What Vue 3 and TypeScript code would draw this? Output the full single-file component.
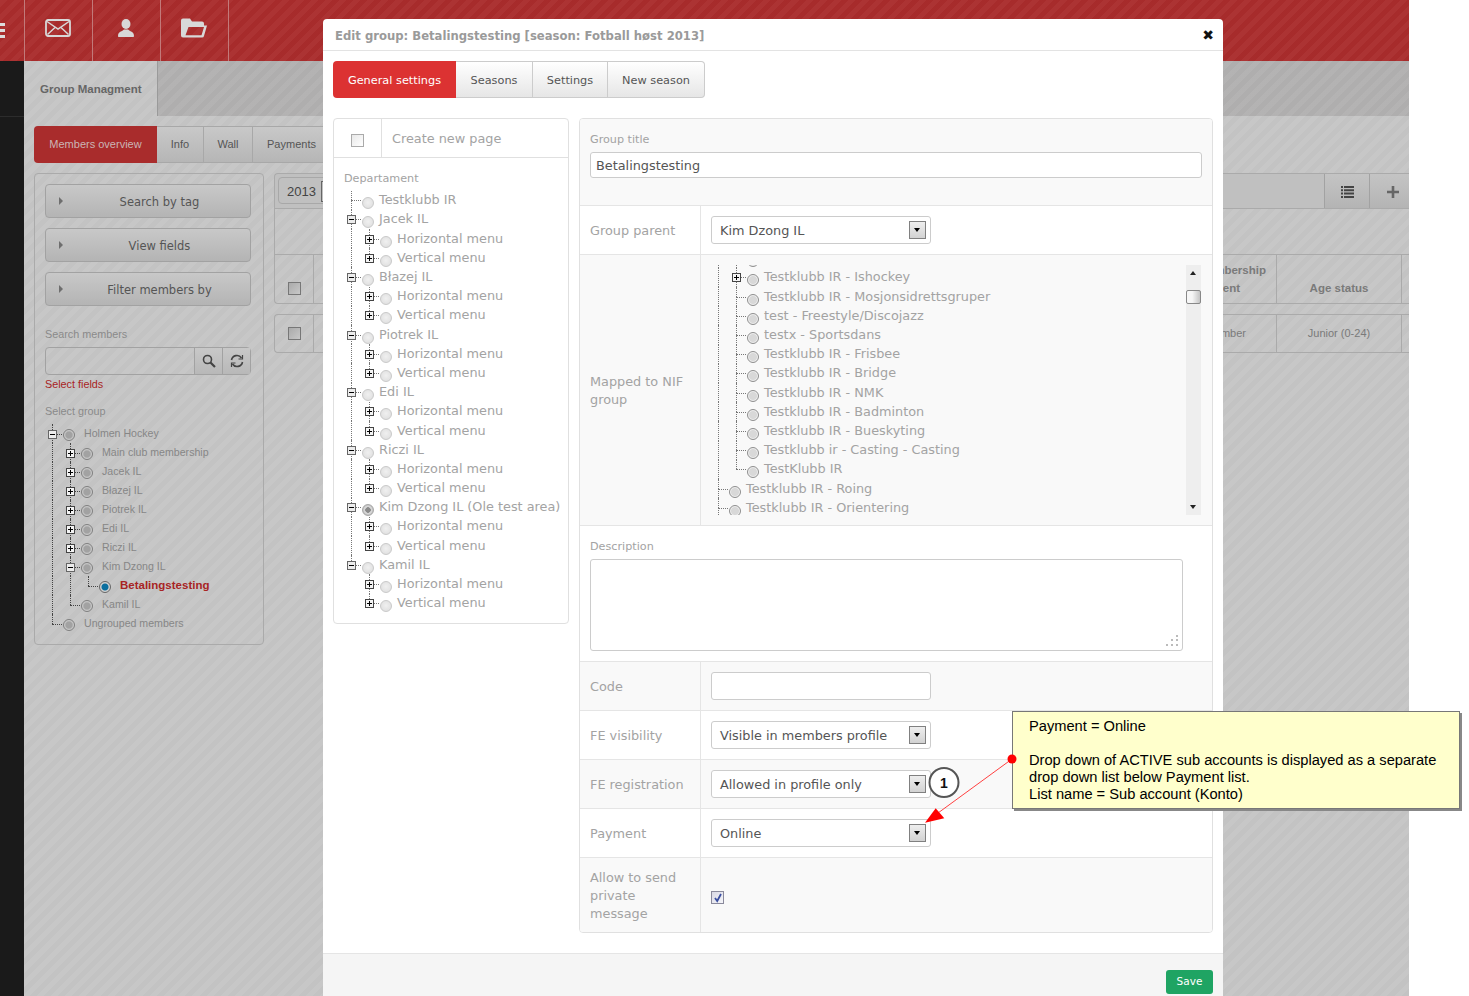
<script setup lang="ts">
interface TreeNode { label: string; open?: boolean; closed?: boolean; kids?: TreeNode[]; on?: boolean; picked?: boolean }
interface Row { label: string; guides: boolean[]; up: boolean; down: boolean; tog: string; on: boolean; picked: boolean }

function flat(nodes: TreeNode[], guides: boolean[] = [], root = true): Row[] {
  const out: Row[] = []
  nodes.forEach((n, i) => {
    const last = i === nodes.length - 1
    out.push({
      label: n.label,
      guides,
      up: !(root && i === 0 && guides.length > 0),
      down: !last,
      tog: n.open ? 'm' : n.closed ? 'p' : '',
      on: !!n.on,
      picked: !!n.picked,
    })
    if (n.kids) out.push(...flat(n.kids, [...guides, !last], false))
  })
  return out
}

const hv = (): TreeNode[] => [
  { label: 'Horizontal menu', closed: true },
  { label: 'Vertical menu', closed: true },
]
const deptRows = flat([
  { label: 'Testklubb IR' },
  ...['Jacek IL', 'Błazej IL', 'Piotrek IL', 'Edi IL', 'Riczi IL'].map((l) => ({ label: l, open: true, kids: hv() })),
  { label: 'Kim Dzong IL (Ole test area)', open: true, on: true, kids: hv() },
  { label: 'Kamil IL', open: true, kids: hv() },
])

// Rows with an empty label sit in the clipped part of the scrolled list.
const nifRows = flat([
  {
    label: '',
    open: true,
    kids: [
      { label: '' },
      { label: 'Testklubb IR - Ishockey', closed: true },
      ...['Testklubb IR - Mosjonsidrettsgruper', 'test - Freestyle/Discojazz', 'testx - Sportsdans', 'Testklubb IR - Frisbee', 'Testklubb IR - Bridge', 'Testklubb IR - NMK', 'Testklubb IR - Badminton', 'Testklubb IR - Bueskyting', 'Testklubb ir - Casting - Casting', 'TestKlubb IR'].map((l) => ({ label: l })),
    ],
  },
  { label: 'Testklubb IR - Roing' },
  { label: 'Testklubb IR - Orientering' },
  { label: '' },
])

const groupRows = flat([
  {
    label: 'Holmen Hockey',
    open: true,
    kids: [
      ...['Main club membership', 'Jacek IL', 'Błazej IL', 'Piotrek IL', 'Edi IL', 'Riczi IL'].map((l) => ({ label: l, closed: true })),
      { label: 'Kim Dzong IL', open: true, kids: [{ label: 'Betalingstesting', picked: true }] },
      { label: 'Kamil IL' },
    ],
  },
  { label: 'Ungrouped members' },
])

const sideButtons = ['Search by tag', 'View fields', 'Filter members by']
const feRows = [
  { label: 'FE visibility', value: 'Visible in members profile', alt: false },
  { label: 'FE registration', value: 'Allowed in profile only', alt: true },
  { label: 'Payment', value: 'Online', alt: false },
]
</script>

<template>
  <div class="app">
    <header class="topbar">
      <div class="burger"><i></i><i></i><i></i></div>
      <div class="topcell">
        <svg width="26" height="18" viewBox="0 0 26 18" fill="none" stroke="#d8d8d8" stroke-width="1.800"><rect x="1" y="1" width="24" height="16" rx="2" /><path d="M2 2.500l11 7.500 11-7.500" stroke-width="1.500" /><path d="M2.500 15.500l7.500-7M23.500 15.500l-7.500-7" stroke-width="1.500" /></svg>
      </div>
      <div class="topcell">
        <svg width="16" height="18" viewBox="0 0 16 18" fill="#d8d8d8"><ellipse cx="8" cy="5" rx="4.500" ry="5" /><path d="M0 17c0-3 1.500-4 4-5l2-1.500h4l2 1.500c2.500 1 4 2 4 5 0 .6-.4 1-1 1H1c-.6 0-1-.4-1-1z" /></svg>
      </div>
      <div class="topcell">
        <svg width="26" height="20" viewBox="0 0 26 20" fill="#d8d8d8" fill-rule="evenodd"><path d="M0 2.500a2 2 0 0 1 2-2h7l2 3h10a2 2 0 0 1 2 2v2h3l-3 10.500a2 2 0 0 1-2 1.500H2a2 2 0 0 1-2-2zM7.500 9h15.500l-2.500 8.200H4.500z" /></svg>
      </div>
    </header>

    <div class="below">
      <div class="blackcol"></div>
      <main class="main">
        <div class="tabstrip"><div class="striptab">Group Managment</div></div>
        <div class="content">
          <nav class="subtabs">
            <span class="subtab active">Members overview</span>
            <span class="subtab s-info">Info</span>
            <span class="subtab s-wall">Wall</span>
            <span class="subtab s-pay">Payments</span>
          </nav>
          <div class="columns">
            <aside class="side">
              <button v-for="b in sideButtons" :key="b" class="sidebtn" type="button">
                <i class="caret"></i><span>{{ b }}</span>
              </button>
              <div class="sidelabel sl-search">Search members</div>
              <div class="searchbox">
                <div class="searchinput"></div>
                <div class="searchbtn">
                  <svg width="14" height="14" viewBox="0 0 14 14" fill="none" stroke="#444" stroke-width="1.600"><circle cx="5.500" cy="5.500" r="4" /><path d="M8.500 8.500l4.500 4.500" stroke-width="2.200" /></svg>
                </div>
                <div class="searchbtn">
                  <svg width="14" height="14" viewBox="0 0 14 14" fill="none" stroke="#444" stroke-width="1.600"><path d="M1.500 6a5.500 5.500 0 0 1 10-2M12.500 8a5.500 5.500 0 0 1-10 2" /><path d="M12.500 1v4h-4M1.500 13V9h4" stroke-width="1.200" /></svg>
                </div>
              </div>
              <div class="selectfields">Select fields</div>
              <div class="sidelabel sl-group">Select group</div>
              <div class="tree gtree">
                <div v-for="(r, i) in groupRows" :key="i" class="trow">
                  <span v-for="(g, j) in r.guides" :key="j" class="node"><i v-if="g" class="vfull"></i></span>
                  <span class="node">
                    <i v-if="r.up" class="vup"></i><i v-if="r.down" class="vdown"></i><i class="hline"></i>
                    <span v-if="r.tog" class="tog" :class="r.tog"></span>
                  </span>
                  <span class="radio" :class="{ picked: r.picked }"></span>
                  <span class="tlabel" :class="{ pickedlabel: r.picked }">{{ r.label }}</span>
                </div>
              </div>
            </aside>

            <section class="rightcol">
              <div class="yearbar">
                <div class="yearsel">2013<i></i></div>
                <div class="barbtns">
                  <span class="barbtn b-list">
                    <svg width="13" height="12" viewBox="0 0 13 12" fill="#444"><path d="M0 0h2v2H0zM3 0h10v2H3zM0 3.300h2v2H0zM3 3.300h10v2H3zM0 6.600h2v2H0zM3 6.600h10v2H3zM0 10h2v2H0zM3 10h10v2H3z" /></svg>
                  </span>
                  <span class="barbtn b-plus">
                    <svg width="12" height="12" viewBox="0 0 12 12" fill="#666"><path d="M4.700 0h2.600v4.700H12v2.600H7.300V12H4.700V7.300H0V4.700h4.700z" /></svg>
                  </span>
                </div>
              </div>
              <div class="tblgap"></div>
              <div class="tbl thead">
                <div class="c1"><span class="chk"></span></div>
                <div class="c2"><b>Membership</b><b class="line2">Payment</b></div>
                <div class="c3"><b>Age status</b></div>
                <div class="c4"></div>
              </div>
              <div class="tbl tbody">
                <div class="c1"><span class="chk"></span></div>
                <div class="c2"><span>Member</span></div>
                <div class="c3"><span>Junior (0-24)</span></div>
                <div class="c4"></div>
              </div>
            </section>
          </div>
        </div>
      </main>
    </div>

    <div class="modal">
      <div class="mhead">
        <span>Edit group: Betalingstesting [season: Fotball høst 2013]</span>
        <span class="mclose">✖</span>
      </div>
      <div class="mbody">
        <nav class="mtabs">
          <span class="mtab active">General settings</span>
          <span class="mtab m2">Seasons</span>
          <span class="mtab m3">Settings</span>
          <span class="mtab m4">New season</span>
        </nav>
        <div class="mcols">
          <div class="deptpanel">
            <div class="newpage">
              <div class="npchk"><span class="chk light"></span></div>
              <div class="nptext">Create new page</div>
            </div>
            <div class="deptlabel">Departament</div>
            <div class="tree dtree">
              <div v-for="(r, i) in deptRows" :key="i" class="trow">
                <span v-for="(g, j) in r.guides" :key="j" class="node"><i v-if="g" class="vfull"></i></span>
                <span class="node">
                  <i v-if="r.up" class="vup"></i><i v-if="r.down" class="vdown"></i><i class="hline"></i>
                  <span v-if="r.tog" class="tog" :class="r.tog"></span>
                </span>
                <span class="radio" :class="{ onr: r.on }"></span>
                <span class="tlabel">{{ r.label }}</span>
              </div>
            </div>
          </div>

          <div class="form">
            <div class="frow stack alt titlerow">
              <label class="flabel">Group title</label>
              <div class="tinput">Betalingstesting</div>
            </div>
            <div class="frow">
              <label class="fkey">Group parent</label>
              <div class="fval"><div class="sel">Kim Dzong IL<i class="selbtn"></i></div></div>
            </div>
            <div class="frow alt nifrow">
              <label class="fkey"><span>Mapped to NIF group</span></label>
              <div class="fval nifval">
                <div class="tree ntree">
                  <div class="ninner">
                    <div v-for="(r, i) in nifRows" :key="i" class="trow">
                      <span v-for="(g, j) in r.guides" :key="j" class="node"><i v-if="g" class="vfull"></i></span>
                      <span class="node">
                        <i v-if="r.up" class="vup"></i><i v-if="r.down" class="vdown"></i><i class="hline"></i>
                        <span v-if="r.tog" class="tog" :class="r.tog"></span>
                      </span>
                      <span class="radio dark"></span>
                      <span v-if="r.label" class="tlabel">{{ r.label }}</span>
                    </div>
                  </div>
                </div>
                <div class="scrollbar">
                  <i class="sup"></i><i class="sthumb"></i><i class="sdown"></i>
                </div>
              </div>
            </div>
            <div class="frow stack descrow">
              <label class="flabel">Description</label>
              <div class="textarea">
                <svg class="grip" width="14" height="14" viewBox="0 0 14 14" fill="#bbb"><path d="M11 1h2v2h-2zM6 5h2v2H6zM11 5h2v2h-2zM1 10h2v2H1zM6 10h2v2H6zM11 10h2v2h-2z" /></svg>
              </div>
            </div>
            <div class="frow alt">
              <label class="fkey">Code</label>
              <div class="fval"><div class="sel"></div></div>
            </div>
            <div v-for="f in feRows" :key="f.label" class="frow" :class="{ alt: f.alt }">
              <label class="fkey">{{ f.label }}</label>
              <div class="fval"><div class="sel">{{ f.value }}<i class="selbtn"></i></div></div>
            </div>
            <div class="frow alt allowrow">
              <label class="fkey"><span>Allow to send private message</span></label>
              <div class="fval">
                <span class="checked">
                  <svg width="10" height="10" viewBox="0 0 10 10" fill="none" stroke="#3b4fa0" stroke-width="1.800"><path d="M2 5l2.200 3L8 1" /></svg>
                </span>
              </div>
            </div>
          </div>
        </div>
      </div>
      <footer class="mfoot"><span class="save">Save</span></footer>
    </div>

    <svg class="annot" width="1469" height="996" viewBox="0 0 1469 996">
      <path d="M1012 759L938 813" stroke="#ff4040" stroke-width="1" fill="none" />
      <path d="M925 822.700L935.700 808.300L944.300 818.300z" fill="#f00" />
      <circle cx="1012" cy="759" r="4.500" fill="#f00" />
      <circle cx="944" cy="782.500" r="14.500" fill="#fff" stroke="#555" stroke-width="2" />
      <text x="944" y="788" text-anchor="middle" class="onetxt">1</text>
    </svg>

    <div class="note">
      <div>Payment = Online</div>
      <div class="blank"></div>
      <div>Drop down of ACTIVE sub accounts is displayed as a separate</div>
      <div>drop down list below Payment list.</div>
      <div>List name = Sub account (Konto)</div>
    </div>
  </div>
</template>

<style>
html, body { margin: 0; background: #fff; overflow: hidden; }
</style>

<style scoped>
.app {
  position: relative;
  width: 1409px;
  height: 996px;
  overflow: visible;
  font-family: "DejaVu Sans", Verdana, sans-serif;
  --stripe: repeating-linear-gradient(135deg, rgba(255,255,255,.035) 0 5px, rgba(0,0,0,.012) 5px 10px);
  background: var(--stripe), #c5c5c5;
}
i { display: block; font-style: normal; }

.topbar { height: 61px; display: flex; padding-left: 24px; background: var(--stripe), #a92c2c; position: relative; box-sizing: border-box; }
.burger { position: absolute; left: 0; top: 23px; display: flex; flex-direction: column; gap: 3px; }
.burger i { width: 5px; height: 3px; background: #ddd; }
.topcell { width: 68px; height: 61px; border-left: 1px solid #c27a7a; display: flex; align-items: center; justify-content: center; padding: 0 2px 5px 0; box-sizing: border-box; }
.topcell:last-child { width: 69px; border-right: 1px solid #c27a7a; }

.below { display: flex; height: 935px; }
.blackcol { width: 24px; flex: none; background: linear-gradient(#1a1a1a 0 55px, #2c2c2c 55px 56px, #1a1a1a 56px); }
.main { flex: 1; min-width: 0; }
.tabstrip { height: 55px; background: var(--stripe), #b1b0b0; }
.striptab { width: 134px; height: 55px; box-sizing: border-box; padding: 21px 0 0 16px; background: var(--stripe), #c5c5c5; border-right: 1px solid #9a9a9a; font: bold 11.500px/14px "Liberation Sans", sans-serif; color: #666; white-space: nowrap; }
.content { padding: 10px 0 0 10px; }

.subtabs { display: flex; height: 37px; margin-bottom: 10px; }
.subtab { box-sizing: border-box; display: flex; align-items: center; justify-content: center; padding-bottom: 1px; font: 11px "Liberation Sans", sans-serif; color: #555; background: linear-gradient(#c8c8c8, #b6b6b6); border: 1px solid #a8a8a8; border-left: 0; }
.subtab.active { width: 123px; background: #a92c2c; color: #cbb5b5; border: 0; border-radius: 4px 0 0 4px; }
.s-info { width: 47px; }
.s-wall { width: 49px; }
.s-pay { width: 78px; }

.columns { display: flex; gap: 10px; }
.side { width: 230px; height: 472px; box-sizing: border-box; flex: none; border: 1px solid #aaa; border-radius: 4px; padding: 10px 12px 0 10px; }
.sidebtn { display: flex; align-items: center; position: relative; justify-content: center; width: 206px; height: 34px; margin-bottom: 10px; padding: 2px 0 0 23px; box-sizing: border-box; border: 1px solid #a2a2a2; border-radius: 4px; background: linear-gradient(#c8c8c8, #b4b4b4); font: 11.500px "DejaVu Sans", sans-serif; color: #555; }
.caret { position: absolute; left: 13px; top: 12px; width: 0; height: 0; border-left: 4px solid #6e6e6e; border-top: 4px solid transparent; border-bottom: 4px solid transparent; }
.sidelabel { font: 10.800px/13px "Liberation Sans", sans-serif; color: #8a8a8a; }
.sl-search { margin-top: 22px; }
.searchbox { display: flex; width: 206px; height: 28px; margin-top: 6px; box-sizing: border-box; border: 1px solid #a2a2a2; border-radius: 4px; }
.searchinput { flex: 1; }
.searchbtn { width: 27px; border-left: 1px solid #a2a2a2; display: flex; align-items: center; justify-content: center; background: linear-gradient(#c8c8c8, #b8b8b8); }
.selectfields { font: 10.800px/13px "Liberation Sans", sans-serif; color: #a82424; margin-top: 3px; }
.sl-group { margin-top: 14px; }

.tree { position: relative; }
.trow { display: flex; height: 19.200px; align-items: center; }
.node { position: relative; width: 18px; height: 100%; flex: none; }
.vfull, .vup, .vdown, .hline { position: absolute; }
.vfull { left: 8px; top: 0; bottom: 0; border-left: 1px dotted #777; }
.vup { left: 8px; top: 0; height: 50%; border-left: 1px dotted #777; }
.vdown { left: 8px; top: 50%; bottom: 0; border-left: 1px dotted #777; }
.hline { left: 8px; top: 50%; width: 10px; border-top: 1px dotted #777; }
.tog { position: absolute; left: 4px; top: 50%; width: 9px; height: 9px; margin-top: -4px; box-sizing: border-box; border: 1px solid #444; background: #f4f4f4; }
.tog::before { content: ""; position: absolute; left: 1px; top: 3px; width: 5px; height: 1px; background: #000; }
.tog.p::after { content: ""; position: absolute; left: 3px; top: 1px; width: 1px; height: 5px; background: #000; }
.tog.m { border-color: #666; background: #ececec; }
.radio { flex: none; width: 12px; height: 12px; box-sizing: border-box; margin: 0 0 0 1px; border-radius: 50%; border: 1px solid #c9c9c9; background: radial-gradient(circle at 50% 45%, #f0f0f0, #dcdcdc); transform: translateY(3px); }
.radio.onr { border: 1px solid #a8a8a8; background: radial-gradient(circle, #8a8a8a 0 2.500px, #d6d6d6 3px 4px, #bbb 5px); }
.radio.dark { border: 1px solid #8e8e8e; background: radial-gradient(circle at 50% 50%, #d8d8d8 0 3.500px, #eee 4.500px); }
.tlabel { margin-left: 5px; white-space: nowrap; font-size: 12.830px; line-height: 16px; color: #a3a3a3; }

.gtree { margin-top: 6px; margin-left: -1px; }
.gtree .trow { height: 19px; }
.gtree .radio { border: 1px solid #7f7f7f; background: radial-gradient(circle, #a2a2a2 0 3px, #c8c8c8 4.500px); transform: translateY(1px); }
.gtree .radio.picked { border-color: #666; background: radial-gradient(circle, #0b6f9f 0 3px, #d0d0d0 4px); }
.gtree .tlabel { margin-left: 9px; font: 10.600px/13px "Liberation Sans", sans-serif; color: #868686; }
.gtree .pickedlabel { color: #a82424; font: bold 11.500px/13px "Liberation Sans", sans-serif; }
.gtree .vfull, .gtree .vup, .gtree .vdown, .gtree .hline { border-color: #444; }

.rightcol { flex: 1; min-width: 0; overflow: hidden; }
.yearbar { height: 36px; box-sizing: border-box; border: 1px solid #aaa; border-right: 0; border-radius: 4px 0 0 0; display: flex; justify-content: space-between; background: #c0c0c0; }
.yearsel { margin: 3px 0 0 3px; width: 60px; height: 27px; box-sizing: border-box; border: 1px solid #a8a8a8; border-radius: 4px; padding: 6px 0 0 8px; font: 13px/16px "Liberation Sans", sans-serif; color: #444; position: relative; }
.yearsel i { position: absolute; left: 42px; top: 3px; width: 14px; height: 19px; border: 1px solid #666; }
.barbtns { display: flex; }
.barbtn { display: flex; align-items: center; justify-content: center; height: 34px; padding-top: 1px; background: linear-gradient(#c4c4c4, #b4b4b4); border-left: 1px solid #a2a2a2; box-sizing: border-box; }
.b-list { width: 45px; }
.b-plus { width: 40px; padding-left: 7px; }
.tblgap { height: 45px; border-left: 1px solid #aaa; box-sizing: border-box; }
.tbl { display: flex; box-sizing: border-box; border: 1px solid #aaa; border-right: 0; color: #7a7a7a; font: 11px "Liberation Sans", sans-serif; }
.thead { height: 50px; border-radius: 0 0 0 4px; font: bold 11.500px "Liberation Sans", sans-serif; }
.tbody { height: 39px; margin-top: 10px; border-radius: 4px 0 0 4px; }
.c1 { width: 39px; flex: none; border-right: 1px solid #aaa; box-sizing: border-box; display: flex; align-items: center; justify-content: center; }
.thead .c1 { padding-top: 18px; }
.c2 { flex: 1; min-width: 0; display: flex; flex-direction: column; align-items: flex-end; justify-content: center; padding-right: 10px; }
.thead .c2 { line-height: 18px; }
.line2 { margin-right: 26px; }
.tbody .c2 { padding: 0 30px 2px 0; }
.c3 { width: 126px; flex: none; border-left: 1px solid #aaa; border-right: 1px solid #aaa; box-sizing: border-box; display: flex; align-items: center; justify-content: center; }
.thead .c3 { padding-top: 18px; }
.tbody .c3 { padding-bottom: 2px; }
.c4 { width: 7px; flex: none; }
.chk { display: block; width: 13px; height: 13px; box-sizing: border-box; border: 1px solid #777; background: linear-gradient(135deg, #aaa, #c8c8c8); }
.chk.light { border-color: #aaa; background: linear-gradient(135deg, #e8e8e8, #fff); }

.modal { position: absolute; left: 323px; top: 19px; width: 900px; height: 977px; background: #fff; border-radius: 4px 4px 0 0; display: flex; flex-direction: column; }
.mhead { height: 32px; box-sizing: border-box; border-bottom: 1px solid #e3e3e3; padding: 9px 9px 0 12px; display: flex; justify-content: space-between; font: bold 11.650px/16px "DejaVu Sans", sans-serif; color: #9a9a9a; }
.mclose { color: #111; font-size: 14px; margin-top: -1px; }
.mbody { flex: 1; padding: 10px 10px 0; min-height: 0; }
.mtabs { display: flex; height: 37px; margin-bottom: 20px; }
.mtab { display: flex; align-items: center; justify-content: center; box-sizing: border-box; padding-top: 2px; font-size: 11.300px; color: #555; background: linear-gradient(#fff, #e6e6e6); border: 1px solid #ccc; border-left: 0; }
.mtab.active { width: 123px; background: #dc3232; color: #fff; border: 0; border-radius: 4px 0 0 4px; }
.m2 { width: 77px; }
.m3 { width: 75px; }
.m4 { width: 97px; border-radius: 0 4px 4px 0; }
.mcols { display: flex; gap: 10px; align-items: flex-start; }
.deptpanel { width: 236px; height: 506px; box-sizing: border-box; flex: none; border: 1px solid #e0e0e0; border-radius: 4px; }
.newpage { display: flex; height: 39px; border-bottom: 1px solid #e0e0e0; box-sizing: border-box; }
.npchk { width: 48px; border-right: 1px solid #e0e0e0; display: flex; align-items: center; justify-content: center; padding-top: 5px; box-sizing: border-box; }
.nptext { padding: 12px 0 0 10px; font-size: 12.830px; line-height: 16px; color: #a3a3a3; }
.deptlabel { margin: 14px 0 0 10px; font-size: 11.200px; line-height: 14px; color: #a3a3a3; }
.dtree { margin: 4.700px 0 0 9px; }

.form { flex: 1; border: 1px solid #e0e0e0; border-radius: 4px; height: 815px; box-sizing: border-box; overflow: hidden; }
.frow { display: flex; height: 49px; box-sizing: border-box; border-bottom: 1px solid #e5e5e5; }
.frow:last-child { border-bottom: 0; }
.alt { background: #f9f9f9; }
.stack { display: block; padding: 14px 10px 0; }
.titlerow { height: 87px; }
.descrow { height: 136px; }
.nifrow { height: 271px; }
.allowrow { height: 75px; }
.flabel { display: block; font-size: 11.200px; line-height: 14px; color: #a3a3a3; }
.tinput { margin-top: 5px; height: 26px; box-sizing: border-box; border: 1px solid #ccc; border-radius: 3px; background: #fff; padding: 5px 0 0 5px; font-size: 12.830px; line-height: 16px; color: #555; }
.fkey { width: 121px; flex: none; box-sizing: border-box; border-right: 1px solid #e5e5e5; padding: 2px 10px 0; display: flex; align-items: center; font-size: 12.830px; line-height: 18px; color: #a3a3a3; }
.allowrow .fkey { padding-top: 0; }
.fkey span { display: block; }
.fval { flex: 1; display: flex; align-items: center; padding-left: 10px; min-width: 0; }
.allowrow .fval { padding-top: 4px; }
.sel { position: relative; width: 220px; height: 28px; box-sizing: border-box; border: 1px solid #ccc; border-radius: 3px; background: #fff; padding: 6px 0 0 8px; font-size: 12.830px; line-height: 16px; color: #555; }
.selbtn { position: absolute; right: 4px; top: 4px; width: 17px; height: 18px; box-sizing: border-box; border: 1.500px solid #808080; background: linear-gradient(#eee, #d2d2d2); }
.selbtn::after { content: ""; position: absolute; left: 3.500px; top: 6px; border-left: 3.500px solid transparent; border-right: 3.500px solid transparent; border-top: 4px solid #000; }
.nifval { align-items: flex-start; padding: 10px 11px 0 9px; justify-content: space-between; }
.ntree { width: 460px; height: 250px; overflow: hidden; }
.ninner { margin-top: -35.500px; }
.scrollbar { position: relative; width: 15px; height: 250px; background: #eeeeee; flex: none; }
.sup { position: absolute; left: 4px; top: 6px; border-left: 3.500px solid transparent; border-right: 3.500px solid transparent; border-bottom: 4px solid #222; }
.sdown { position: absolute; left: 4px; bottom: 6px; border-left: 3.500px solid transparent; border-right: 3.500px solid transparent; border-top: 4px solid #222; }
.sthumb { position: absolute; left: 0; top: 25px; width: 15px; height: 14px; box-sizing: border-box; border: 1px solid #888; border-radius: 2px; background: linear-gradient(90deg, #f6f6f6 40%, #c4c4c4); }
.textarea { position: relative; margin-top: 5px; width: 593px; height: 92px; box-sizing: border-box; border: 1px solid #ccc; border-radius: 3px; background: #fff; }
.grip { position: absolute; right: 3px; bottom: 2px; }
.checked { display: flex; align-items: center; justify-content: center; width: 13px; height: 13px; box-sizing: border-box; border: 1px solid #8a8a9c; background: linear-gradient(135deg, #d8d8e4, #f6f6fa); }

.mfoot { height: 43px; box-sizing: border-box; border-top: 1px solid #e5e5e5; background: #f5f5f5; display: flex; justify-content: flex-end; align-items: flex-start; padding: 16px 10px 0; }
.save { width: 47px; height: 24px; box-sizing: border-box; border-radius: 3px; background: #1fa463; color: #fff; font-size: 10.500px; line-height: 22px; text-align: center; }

.annot { position: absolute; left: 0; top: 0; pointer-events: none; z-index: 2; overflow: visible; }
.onetxt { font: bold 14px "Liberation Sans", sans-serif; fill: #111; }
.note { position: absolute; left: 1012px; top: 711px; width: 448px; height: 98px; box-sizing: border-box; z-index: 1; padding: 6px 0 0 16px; border: 1px solid #777; background: #ffc; box-shadow: 2px 2px 0 #888; font: 14.670px/17px "Liberation Sans", sans-serif; color: #000; white-space: nowrap; }
.blank { height: 17px; }
</style>
